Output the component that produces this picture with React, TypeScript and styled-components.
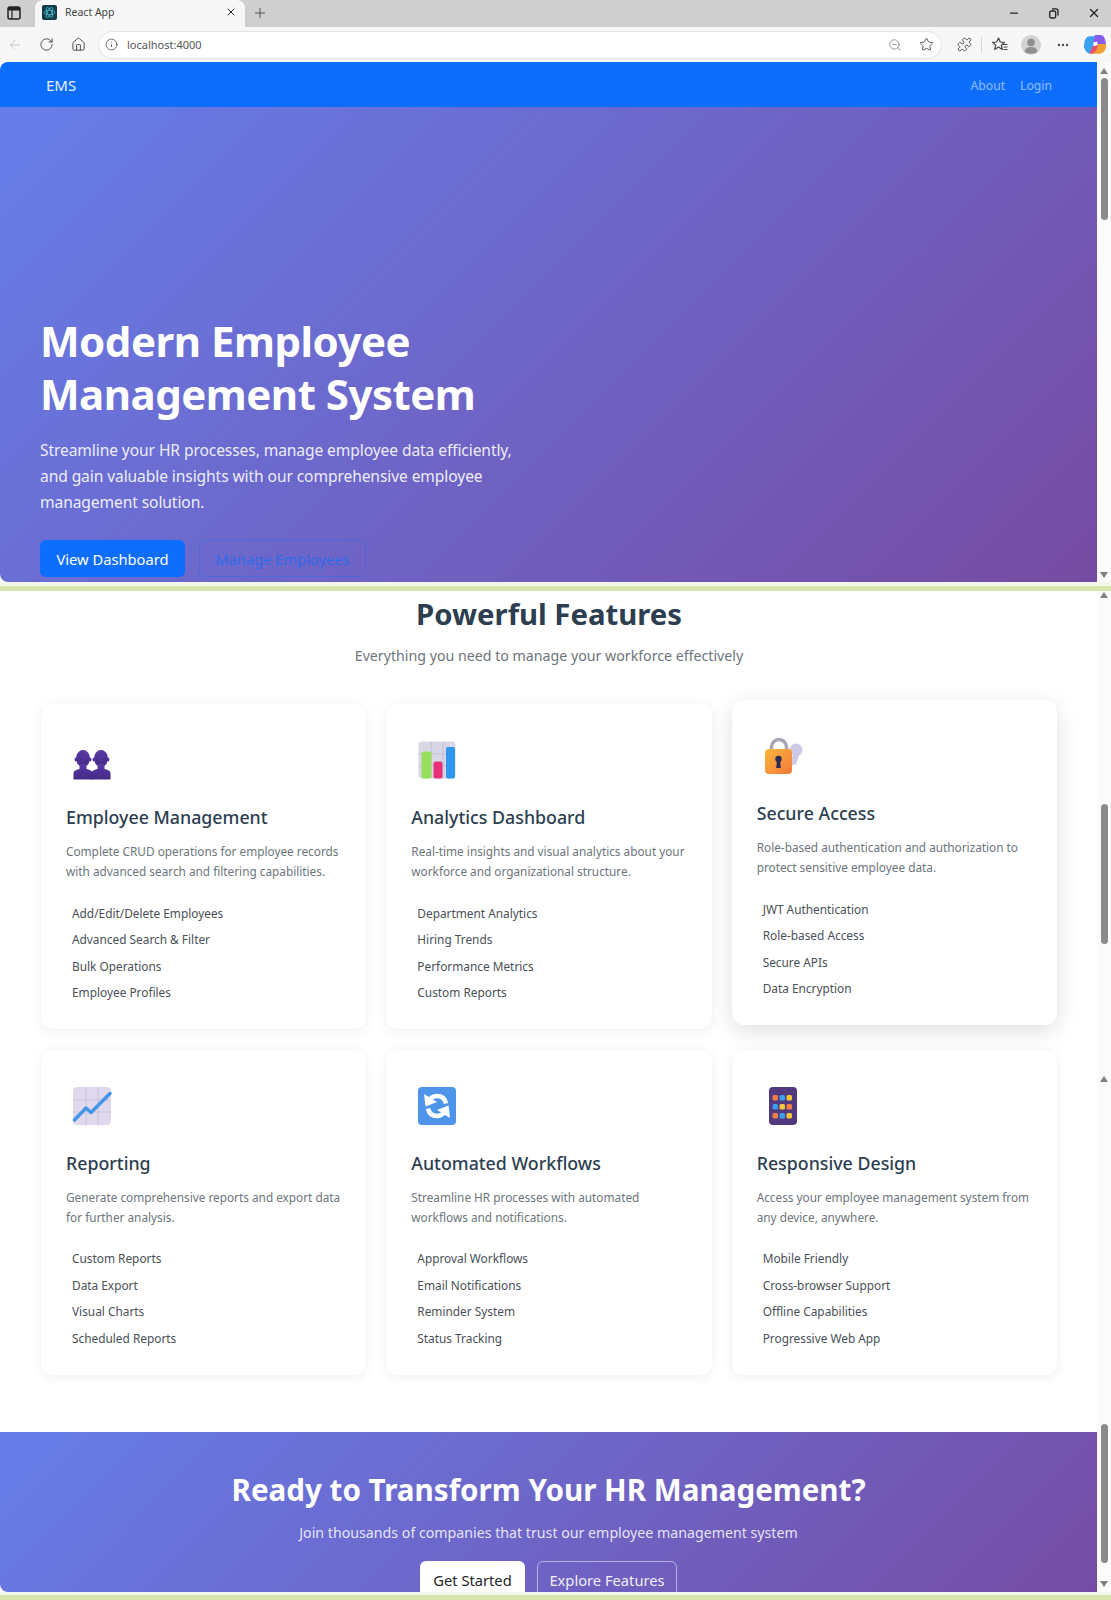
import React from "react";
import styled, { createGlobalStyle } from "styled-components";
import { ArrowLeft, RotateCw, House, Info, ZoomOut, Star, Puzzle, Ellipsis, X, Plus, Minus } from "lucide-react";

const Global = createGlobalStyle`
  html, body { margin: 0; padding: 0; background: #fff; }
  body { font-family: "Noto Sans", "Open Sans", "Liberation Sans", sans-serif; }
  * { box-sizing: border-box; }
`;

const Page = styled.div`
  width: 1111px;
  height: 1600px;
  overflow: hidden;
  display: flex;
  flex-direction: column;
  background: #fff;
`;

const TabStrip = styled.div`
  height: 27px;
  flex: none;
  background: #cfcfcf;
  display: flex;
  align-items: center;
  color: #222;
`;
const SideButton = styled.div`
  width: 35px;
  display: flex;
  justify-content: center;
  padding: 0 7px 2px 0;
`;
const Tab = styled.div`
  width: 210px;
  height: 27px;
  background: #f7f7f7;
  border-radius: 8px 8px 0 0;
  display: flex;
  align-items: center;
  padding: 0 8px 3px 7px;
  gap: 8px;
  font-size: 10.5px;
  color: #444;
`;
const TabTitle = styled.span`
  flex: 1;
`;
const NewTab = styled.div`
  width: 30px;
  display: flex;
  justify-content: center;
  color: #444;
  padding-bottom: 2px;
`;
const StripSpace = styled.div`
  flex: 1;
`;
const WindowButton = styled.div<{ $w: number }>`
  width: ${(p) => p.$w}px;
  display: flex;
  justify-content: center;
  padding-bottom: 1px;
`;
const Toolbar = styled.div`
  height: 35px;
  flex: none;
  background: #f7f7f7;
  display: flex;
  align-items: center;
  color: #444;
`;
const ToolButton = styled.div<{ $w?: number; $muted?: boolean }>`
  width: ${(p) => p.$w ?? 32}px;
  flex: none;
  display: flex;
  justify-content: center;
  color: ${(p) => (p.$muted ? "#c4c4c4" : "#444")};
`;
const Address = styled.div`
  width: 844px;
  height: 28px;
  flex: none;
  margin: 0 5px 0 4px;
  background: #fff;
  border: 1px solid #e3e3e3;
  border-radius: 14px;
  display: flex;
  align-items: center;
  padding: 0 0 0 6px;
  gap: 9px;
  font-size: 11px;
  color: #555;
`;
const Url = styled.span`
  flex: 1;
`;
const ToolDivider = styled.div`
  width: 1px;
  height: 16px;
  background: #d5d5d5;
  flex: none;
`;

const Viewport = styled.div<{ $h: number }>`
  height: ${(p) => p.$h}px;
  flex: none;
  display: flex;
  overflow: hidden;
  background: #fff;
`;
const Main = styled.div<{ $round?: boolean }>`
  width: 1097px;
  flex: none;
  display: flex;
  flex-direction: column;
  overflow: hidden;
  border-radius: ${(p) => (p.$round ? "8px 0 0 8px" : "0")};
`;
const Rail = styled.div`
  width: 14px;
  flex: none;
  display: flex;
  flex-direction: column;
  align-items: center;
  background: #fbfbfb;
`;
const ArrowUp = styled.div<{ $top: number }>`
  margin-top: ${(p) => p.$top}px;
  width: 0;
  height: 0;
  flex: none;
  border-left: 4.5px solid transparent;
  border-right: 4.5px solid transparent;
  border-bottom: 6px solid #808080;
`;
const ArrowDown = styled.div<{ $top: number }>`
  margin-top: ${(p) => p.$top}px;
  width: 0;
  height: 0;
  flex: none;
  border-left: 4.5px solid transparent;
  border-right: 4.5px solid transparent;
  border-top: 6px solid #808080;
`;
const Thumb = styled.div<{ $top: number; $h: number }>`
  margin-top: ${(p) => p.$top}px;
  height: ${(p) => p.$h}px;
  width: 7px;
  flex: none;
  background: #8b8b8b;
  border-radius: 4px;
`;

const Nav = styled.nav`
  height: 45px;
  flex: none;
  background: #0d6efd;
  display: flex;
  align-items: center;
  padding: 0 45px 0 46px;
`;
const Brand = styled.span`
  font-size: 15px;
  color: rgba(255, 255, 255, 0.92);
  flex: 1;
`;
const NavLinks = styled.div`
  display: flex;
  gap: 15px;
  padding-top: 1px;
`;
const NavLink = styled.span`
  font-size: 12.2px;
  color: rgba(255, 255, 255, 0.55);
`;
const Hero = styled.section`
  flex: 1;
  background: linear-gradient(135deg, #667eea 0%, #764ba2 100%);
  display: flex;
  flex-direction: column;
  justify-content: flex-end;
  padding: 0 0 5px 40px;
`;
const HeroTitle = styled.h1`
  margin: 0 0 17px;
  font-size: 42px;
  line-height: 53px;
  font-weight: 700;
  color: #fff;
  letter-spacing: -0.5px;
`;
const HeroText = styled.p`
  margin: 0 0 25px;
  width: 490px;
  font-size: 15.6px;
  letter-spacing: -0.1px;
  line-height: 26px;
  color: rgba(255, 255, 255, 0.9);
`;
const HeroButtons = styled.div`
  display: flex;
  gap: 14px;
`;
const Button = styled.div<{ $kind: "primary" | "ghost" | "white" | "outline"; $w: number }>`
  width: ${(p) => p.$w}px;
  height: 37px;
  border-radius: 6px;
  display: flex;
  align-items: center;
  justify-content: center;
  font-size: 14.7px;
  flex: none;
  ${(p) =>
    p.$kind === "primary"
      ? "background:#0d6efd;color:#fff;"
      : p.$kind === "ghost"
      ? "border:1px solid rgba(13,110,253,.35);color:#2f6be8;"
      : p.$kind === "white"
      ? "background:#fff;color:#212529;"
      : "border:1px solid rgba(255,255,255,.5);color:rgba(255,255,255,.92);"}
`;

const Seam = styled.div<{ $h: number }>`
  height: ${(p) => p.$h}px;
  flex: none;
  background: #f4f6ee;
  border-bottom: 5px solid #d7e5ac;
`;

const Features = styled.section`
  padding: 4px 40px 0 41px;
`;
const SectionTitle = styled.h2`
  margin: 0;
  text-align: center;
  font-size: 29.3px;
  line-height: 38px;
  font-weight: 700;
  color: #2c3e50;
`;
const SectionText = styled.p`
  margin: 11px 0 36px;
  text-align: center;
  font-size: 14.2px;
  line-height: 24px;
  color: #6c757d;
`;
const Grid = styled.div`
  display: grid;
  grid-template-columns: repeat(3, 1fr);
  column-gap: 20px;
  row-gap: 20.5px;
`;
const Card = styled.article<{ $raised?: boolean }>`
  height: 325px;
  background: #fff;
  border-radius: 12px;
  padding: 32px 25px 0;
  box-shadow: ${(p) => (p.$raised ? "0 6px 22px rgba(0,0,0,.13)" : "0 2px 12px rgba(0,0,0,.07)")};
  transform: ${(p) => (p.$raised ? "translateY(-4px)" : "none")};
`;
const IconBox = styled.div`
  width: 52px;
  height: 48px;
  display: flex;
  align-items: center;
  justify-content: center;
  margin-bottom: 20px;
`;
const CardTitle = styled.h3`
  margin: 0 0 11px;
  font-size: 17.8px;
  line-height: 26px;
  font-weight: 500;
  color: #2c3e50;
`;
const CardText = styled.p`
  margin: 0 0 18px;
  font-size: 11.8px;
  line-height: 20.4px;
  color: #6c757d;
`;
const List = styled.ul`
  margin: 0;
  padding: 0 0 0 6px;
  list-style: none;
`;
const Item = styled.li`
  font-size: 11.85px;
  line-height: 26.4px;
  color: #495057;
`;

const Cta = styled.section`
  margin-top: 57.5px;
  height: 200px;
  flex: none;
  background: linear-gradient(135deg, #667eea 0%, #764ba2 100%);
  padding-top: 39px;
  display: flex;
  flex-direction: column;
  align-items: center;
`;
const CtaTitle = styled.h2`
  margin: 0 0 12px;
  font-size: 29.6px;
  line-height: 38px;
  font-weight: 700;
  color: #fff;
`;
const CtaText = styled.p`
  margin: 0 0 16px;
  font-size: 14.2px;
  line-height: 24px;
  color: rgba(255, 255, 255, 0.85);
`;
const CtaButtons = styled.div`
  display: flex;
  gap: 12px;
  height: 37px;
  align-items: flex-start;
`;

const SidePanel = () => (
  <svg width="14" height="14" viewBox="0 0 14 14">
    <rect x="1" y="1" width="12" height="12" rx="2" fill="none" stroke="#222" strokeWidth="1.5" />
    <rect x="1" y="1" width="12" height="3.500" fill="#222" />
    <path d="M5 4v9" stroke="#222" strokeWidth="1.200" />
  </svg>
);
const Avatar = () => (
  <svg width="20" height="20" viewBox="0 0 20 20">
    <circle cx="10" cy="10" r="10" fill="#d3d3d3" />
    <circle cx="10" cy="7.500" r="3.800" fill="#8f8f8f" />
    <path d="M3.500 16.500c1-3.500 3.500-4.500 6.500-4.500s5.500 1 6.500 4.500c-3 3-10 3-13 0z" fill="#8f8f8f" />
  </svg>
);
const Copilot = () => (
  <svg width="22" height="22" viewBox="0 0 20 20">
    <path d="M5 2h6L9 11l-4 7C2 17 0 14 0 11 0 6 2 2 5 2z" fill="#3aa0f0" />
    <path d="M10 1h5c3 0 4 3 5 8l-8 1-4-3z" fill="#8a5cf0" />
    <path d="M13 9l7 0c1 4-2 9-6 9H8l3-5z" fill="#f0a030" />
    <path d="M5 18l3-7 5-1-2 5-3 3z" fill="#e8506a" />
    <path d="M8.500 7.500l3.500-.5.5 3-4 1z" fill="#fff" />
  </svg>
);
const Favorites = () => (
  <svg width="18" height="18" viewBox="0 0 18 18" fill="none" stroke="#444" strokeWidth="1.2" strokeLinejoin="round">
    <path d="M7.500 2l1.800 4 4.200.4-3.200 2.800 1 4.200-3.800-2.300-3.800 2.300 1-4.200L1.500 6.400 5.700 6z" />
    <path d="M12 8.500h4.500M12.500 11h4M12.500 13.500h4" />
  </svg>
);
const Restore = () => (
  <svg width="10" height="11" viewBox="0 0 10 11" fill="none" stroke="#222" strokeWidth="1.300">
    <rect x="0.700" y="3" width="6" height="7" rx="1.500" />
    <path d="M3 .8h3.800a2.200 2.200 0 0 1 2.200 2.200v4.500" />
  </svg>
);
const ReactFavicon = () => (
  <svg width="15" height="15" viewBox="0 0 15 15">
    <rect width="15" height="15" rx="2" fill="#123c48" />
    <g fill="none" stroke="#4fc3d8" strokeWidth="0.800">
      <ellipse cx="7.500" cy="7.500" rx="5.500" ry="2.200" />
      <ellipse cx="7.500" cy="7.500" rx="5.500" ry="2.200" transform="rotate(60 7.500 7.500)" />
      <ellipse cx="7.500" cy="7.500" rx="5.500" ry="2.200" transform="rotate(120 7.500 7.500)" />
    </g>
  </svg>
);

const Bust = ({ x }: { x: number }) => (
  <g transform={`translate(${x} 0)`}>
    <ellipse cx="10" cy="22.500" rx="7" ry="8.500" />
    <ellipse cx="2.800" cy="23.500" rx="1.200" ry="2" />
    <ellipse cx="17.200" cy="23.500" rx="1.200" ry="2" />
    <path d="M6.500 28h7v5c2.500.8 5.500 1.200 6 4v6.500H.5V37c.5-2.800 3.500-3.200 6-4z" />
  </g>
);
const People = () => (
  <svg width="40" height="48" viewBox="0 0 40 48">
    <defs>
      <linearGradient id="pp" x1="0" y1="0" x2="0" y2="1">
        <stop offset="0" stopColor="#573aa4" />
        <stop offset="1" stopColor="#452a86" />
      </linearGradient>
    </defs>
    <g fill="url(#pp)">
      <Bust x={1} />
      <Bust x={19} />
    </g>
  </svg>
);
const BarChart = () => (
  <svg width="40" height="40" viewBox="0 0 40 40">
    <rect x="1.500" y="1.500" width="37" height="37" rx="4" fill="#d9d6e6" />
    <path d="M14 2v36M26 2v36M2 14h36M2 26h36" stroke="#c3bfd6" strokeWidth="1" />
    <rect x="4.500" y="11.500" width="10" height="27" rx="2" fill="#97e05c" />
    <rect x="16.500" y="21.500" width="9" height="17" rx="2" fill="#e8307a" />
    <rect x="29" y="7" width="9" height="31.500" rx="2" fill="#2e96ec" />
  </svg>
);
const Lock = () => (
  <svg width="40" height="40" viewBox="-1 -1 40 40">
    <defs>
      <linearGradient id="lk" x1="0" y1="0" x2="1" y2="1">
        <stop offset="0" stopColor="#fbb73c" />
        <stop offset="1" stopColor="#f2793b" />
      </linearGradient>
    </defs>
    <path d="M30 16l-5 11 3 2 2-2 2 1 3-10z" fill="#cfc8e6" />
    <circle cx="32" cy="13" r="6.500" fill="#cfc8e6" />
    <path d="M7.500 14v-4a7.500 7.500 0 0 1 15 0v4" fill="none" stroke="#a6a6b4" strokeWidth="3.500" />
    <rect x="1" y="12" width="27" height="25" rx="4" fill="url(#lk)" />
    <circle cx="14.500" cy="22" r="3.200" fill="#2b2a55" />
    <path d="M13 23h3l.8 8h-4.600z" fill="#2b2a55" />
  </svg>
);
const LineChart = () => (
  <svg width="40" height="40" viewBox="0 0 40 40">
    <rect x="1" y="1" width="38" height="38" rx="4" fill="#e0d9ee" />
    <path d="M14 1v38M26 1v38M1 14h38M1 26h38" stroke="#c9c0de" strokeWidth="1" />
    <path d="M2.500 34L14 22l5 4.500L38 7.500" fill="none" stroke="#4496e4" strokeWidth="3.500" strokeLinecap="round" strokeLinejoin="round" />
  </svg>
);
const RefreshHalf = () => (
  <g>
    <path d="M29 17.500c-1-5-4.500-7.500-9-7.500-3 0-5 1-7 3" fill="none" stroke="#fff" strokeWidth="4.500" />
    <path d="M7 8l1.500 12.500L20 16z" fill="#fff" />
  </g>
);
const Refresh = () => (
  <svg width="40" height="40" viewBox="0 0 40 40">
    <rect x="1" y="1" width="38" height="38" rx="4" fill="#4d94ea" />
    <RefreshHalf />
    <g transform="rotate(180 20 20)">
      <RefreshHalf />
    </g>
  </svg>
);
const Phone = () => (
  <svg width="40" height="40" viewBox="0 0 40 40">
    <rect x="6" y="1" width="28" height="38" rx="4" fill="#50397f" />
    {[9, 18, 27].map((y, r) =>
      [12, 19, 26].map((x, c) => (
        <rect
          key={`${r}${c}`}
          x={x - 2.500}
          y={y}
          width="5.500"
          height="5.500"
          rx="1.500"
          fill={[["#ef7f45", "#3a9df0", "#f2c838"], ["#3a9df0", "#f2c838", "#ef7f45"], ["#ef7f45", "#3a9df0", "#f2c838"]][r][c]}
        />
      ))
    )}
  </svg>
);

const cards = [
  { icon: <People />, title: "Employee Management", text: "Complete CRUD operations for employee records with advanced search and filtering capabilities.", items: ["Add/Edit/Delete Employees", "Advanced Search & Filter", "Bulk Operations", "Employee Profiles"] },
  { icon: <BarChart />, title: "Analytics Dashboard", text: "Real-time insights and visual analytics about your workforce and organizational structure.", items: ["Department Analytics", "Hiring Trends", "Performance Metrics", "Custom Reports"] },
  { icon: <Lock />, title: "Secure Access", raised: true, text: "Role-based authentication and authorization to protect sensitive employee data.", items: ["JWT Authentication", "Role-based Access", "Secure APIs", "Data Encryption"] },
  { icon: <LineChart />, title: "Reporting", text: "Generate comprehensive reports and export data for further analysis.", items: ["Custom Reports", "Data Export", "Visual Charts", "Scheduled Reports"] },
  { icon: <Refresh />, title: "Automated Workflows", text: "Streamline HR processes with automated workflows and notifications.", items: ["Approval Workflows", "Email Notifications", "Reminder System", "Status Tracking"] },
  { icon: <Phone />, title: "Responsive Design", text: "Access your employee management system from any device, anywhere.", items: ["Mobile Friendly", "Cross-browser Support", "Offline Capabilities", "Progressive Web App"] },
];

export default function App() {
  return (
    <Page>
      <Global />
      <TabStrip>
        <SideButton><SidePanel /></SideButton>
        <Tab>
          <ReactFavicon />
          <TabTitle>React App</TabTitle>
          <X size={12} strokeWidth={2} color="#222" />
        </Tab>
        <NewTab><Plus size={16} strokeWidth={1.3} /></NewTab>
        <StripSpace />
        <WindowButton $w={34}><Minus size={12} strokeWidth={2.500} /></WindowButton>
        <WindowButton $w={46}><Restore /></WindowButton>
        <WindowButton $w={34}><X size={14} strokeWidth={2.200} /></WindowButton>
      </TabStrip>
      <Toolbar>
        <ToolButton $w={30} $muted><ArrowLeft size={16} strokeWidth={1.5} /></ToolButton>
        <ToolButton><RotateCw size={15} strokeWidth={1.5} /></ToolButton>
        <ToolButton><House size={15} strokeWidth={1.5} /></ToolButton>
        <Address>
          <Info size={13} strokeWidth={1.5} />
          <Url>localhost:4000</Url>
          <ZoomOut size={14} strokeWidth={1.3} color="#777" />
          <ToolButton $w={30}><Star size={15} strokeWidth={1.4} /></ToolButton>
        </Address>
        <ToolButton $w={34}><Puzzle size={15} strokeWidth={1.5} /></ToolButton>
        <ToolDivider />
        <ToolButton $w={36}><Favorites /></ToolButton>
        <ToolButton $w={26}><Avatar /></ToolButton>
        <ToolButton $w={37}><Ellipsis size={14} strokeWidth={2} /></ToolButton>
        <ToolButton $w={28}><Copilot /></ToolButton>
      </Toolbar>

      <Viewport $h={520}>
        <Main $round>
          <Nav>
            <Brand>EMS</Brand>
            <NavLinks>
              <NavLink>About</NavLink>
              <NavLink>Login</NavLink>
            </NavLinks>
          </Nav>
          <Hero>
            <HeroTitle>Modern Employee<br />Management System</HeroTitle>
            <HeroText>Streamline your HR processes, manage employee data efficiently, and gain valuable insights with our comprehensive employee management solution.</HeroText>
            <HeroButtons>
              <Button $kind="primary" $w={145}>View Dashboard</Button>
              <Button $kind="ghost" $w={167}>Manage Employees</Button>
            </HeroButtons>
          </Hero>
        </Main>
        <Rail>
          <ArrowUp $top={6} />
          <Thumb $top={4} $h={142} />
          <ArrowDown $top={352} />
        </Rail>
      </Viewport>
      <Seam $h={9} />

      <Viewport $h={1001}>
        <Main $round>
          <Features>
            <SectionTitle>Powerful Features</SectionTitle>
            <SectionText>Everything you need to manage your workforce effectively</SectionText>
            <Grid>
              {cards.map((c) => (
                <Card key={c.title} $raised={c.raised}>
                  <IconBox>{c.icon}</IconBox>
                  <CardTitle>{c.title}</CardTitle>
                  <CardText>{c.text}</CardText>
                  <List>
                    {c.items.map((i) => (
                      <Item key={i}>{i}</Item>
                    ))}
                  </List>
                </Card>
              ))}
            </Grid>
          </Features>
          <Cta>
            <CtaTitle>Ready to Transform Your HR Management?</CtaTitle>
            <CtaText>Join thousands of companies that trust our employee management system</CtaText>
            <CtaButtons>
              <Button $kind="white" $w={105}>Get Started</Button>
              <Button $kind="outline" $w={140}>Explore Features</Button>
            </CtaButtons>
          </Cta>
        </Main>
        <Rail>
          <ArrowUp $top={1} />
          <Thumb $top={206} $h={140} />
          <ArrowUp $top={132} />
          <Thumb $top={342} $h={139} />
          <ArrowDown $top={18} />
        </Rail>
      </Viewport>
      <Seam $h={8} />
    </Page>
  );
}
